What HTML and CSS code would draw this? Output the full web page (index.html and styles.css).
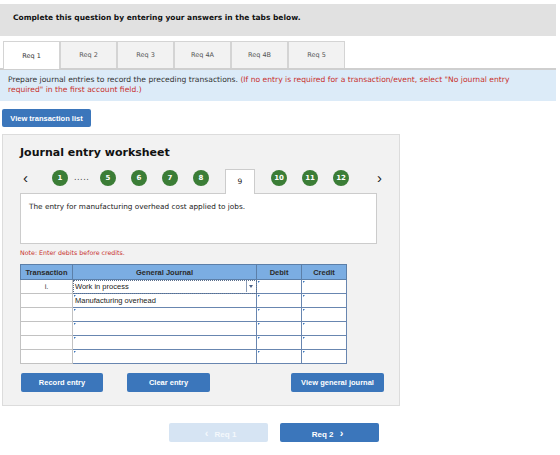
FILE: index.html
```html
<!DOCTYPE html>
<html lang="en">

<head>
    <title>Journal entry worksheet</title>
    <link rel="stylesheet" href="styles.css">
</head>

<body>
    <div class="question-bar">Complete this question by entering your answers in the tabs below.</div>

    <div class="tabs">
        <div class="tab active">Req 1</div>
        <div class="tab">Req 2</div>
        <div class="tab">Req 3</div>
        <div class="tab">Req 4A</div>
        <div class="tab">Req 4B</div>
        <div class="tab">Req 5</div>
    </div>

    <div class="instructions">
        Prepare journal entries to record the preceding transactions.
        <span class="red">(If no entry is required for a transaction/event, select "No journal entry required" in the first account field.)</span>
    </div>

    <button class="btn list-btn">View transaction list</button>

    <div class="worksheet">
        <h3>Journal entry worksheet</h3>

        <div class="steps">
            <span class="arrow prev">&lsaquo;</span>
            <span class="step first">1</span>
            <span class="dots">.....</span>
            <span class="step">5</span>
            <span class="step">6</span>
            <span class="step">7</span>
            <span class="step before-current">8</span>
            <span class="step current">9</span>
            <span class="step">10</span>
            <span class="step">11</span>
            <span class="step">12</span>
            <span class="arrow next">&rsaquo;</span>
        </div>

        <div class="description">The entry for manufacturing overhead cost applied to jobs.</div>

        <div class="note">Note: Enter debits before credits.</div>

        <table class="journal">
            <thead>
                <tr>
                    <th class="col-trans">Transaction</th>
                    <th class="col-account">General Journal</th>
                    <th class="col-amt">Debit</th>
                    <th class="col-amt">Credit</th>
                </tr>
            </thead>
            <tbody>
                <tr>
                    <td class="trans">i.</td>
                    <td class="field account focused">Work in process<span class="caret"></span></td>
                    <td class="field"></td>
                    <td class="field"></td>
                </tr>
                <tr>
                    <td class="trans"></td>
                    <td class="field account">Manufacturing overhead</td>
                    <td class="field"></td>
                    <td class="field"></td>
                </tr>
                <tr>
                    <td class="trans"></td>
                    <td class="field account"></td>
                    <td class="field"></td>
                    <td class="field"></td>
                </tr>
                <tr>
                    <td class="trans"></td>
                    <td class="field account"></td>
                    <td class="field"></td>
                    <td class="field"></td>
                </tr>
                <tr>
                    <td class="trans"></td>
                    <td class="field account"></td>
                    <td class="field"></td>
                    <td class="field"></td>
                </tr>
                <tr>
                    <td class="trans"></td>
                    <td class="field account"></td>
                    <td class="field"></td>
                    <td class="field"></td>
                </tr>
            </tbody>
        </table>

        <div class="actions">
            <button class="btn record-btn">Record entry</button>
            <button class="btn clear-btn">Clear entry</button>
            <button class="btn journal-btn">View general journal</button>
        </div>
    </div>

    <div class="pager">
        <button class="btn page-btn disabled"><span class="chev">&lsaquo;</span> Req 1</button>
        <button class="btn page-btn">Req 2 <span class="chev">&rsaquo;</span></button>
    </div>
</body>

</html>
```

FILE: styles.css
```css
body {
    margin: 0;
    padding: 4px 4px 0 0;
    width: 556px;
    font-family: 'DejaVu Sans', Verdana, sans-serif;
    color: #222;
    background: white;
}

.question-bar {
    background: #e1e1e1;
    height: 32px;
    box-sizing: border-box;
    padding: 9px 0 0 13px;
    font-size: 7.5px;
    font-weight: bold;
    color: #111;
}

.tabs {
    display: flex;
    margin-top: 5px;
    padding-left: 3px;
    border-bottom: 2px solid #cfcfcf;
}

.tab {
    width: 57px;
    height: 27px;
    box-sizing: border-box;
    border: 1px solid #d4d4d4;
    border-bottom: none;
    background: #f2f2f2;
    font-size: 6.5px;
    color: #555;
    display: flex;
    align-items: center;
    justify-content: center;
}

.tab.active {
    background: white;
    height: 28px;
    margin-bottom: -2px;
    color: #333;
}

.instructions {
    background: #dcebf8;
    padding: 5px 24px 6px 8px;
    font-size: 7.6px;
    line-height: 10px;
    color: #333;
}

.red {
    color: #c8302c;
}

.btn {
    border: none;
    border-radius: 2px;
    background: #3b76bb;
    color: white;
    font-family: 'Liberation Sans', Arial, sans-serif;
    font-weight: bold;
    font-size: 7.5px;
    height: 19px;
    padding: 0;
    cursor: pointer;
}

.list-btn {
    display: block;
    margin: 8px 0 0 2px;
    width: 89px;
    height: 18px;
}

.worksheet {
    margin: 7px 0 0 2px;
    width: 398px;
    height: 272px;
    box-sizing: border-box;
    background: #f2f2f2;
    border: 1px solid #dcdcdc;
    padding: 0 0 0 17px;
}

.worksheet h3 {
    margin: 11px 0 0;
    font-size: 11px;
    line-height: 14px;
    color: #111;
}

.steps {
    display: flex;
    align-items: flex-start;
    margin-top: 9px;
    height: 24px;
}

.arrow {
    font-size: 15px;
    line-height: 15px;
    color: #222;
    font-family: 'Liberation Sans', sans-serif;
}

.prev {
    margin: 1px 0 0 3px;
    width: 29px;
}

.next {
    margin: 1px 0 0 13px;
}

.step {
    width: 16px;
    height: 16px;
    margin: 1px 15px 0 0;
    border-radius: 50%;
    background: #3b7d36;
    color: white;
    font-size: 7px;
    font-weight: bold;
    display: flex;
    align-items: center;
    justify-content: center;
}

.step.first {
    margin-right: 6px;
}

.step.before-current {
    margin-right: 16px;
}

.step.current {
    width: 30px;
    height: 25px;
    margin: 0 16px -1px 0;
    padding-bottom: 2px;
    border-radius: 0;
    background: white;
    border: 1px solid #ccc;
    border-bottom: none;
    box-sizing: border-box;
    color: #222;
    font-weight: normal;
    font-size: 7.5px;
    position: relative;
    z-index: 1;
}

.dots {
    width: 26px;
    font-size: 8px;
    color: #444;
    letter-spacing: 0.5px;
    margin-top: 4px;
}

.description {
    width: 357px;
    height: 51px;
    box-sizing: border-box;
    background: white;
    border: 1px solid #ccc;
    padding: 8px 8px;
    font-size: 7.3px;
    color: #222;
}

.note {
    margin-top: 5px;
    font-size: 6.3px;
    color: #c8302c;
}

.journal {
    margin-top: 8px;
    border-collapse: collapse;
    font-family: 'Liberation Sans', Arial, sans-serif;
    font-size: 7.5px;
}

.journal th {
    height: 14px;
    padding: 0;
    background: #7badE2;
    border: 1px solid #5c7fa8;
    font-weight: bold;
    color: #2a2a2a;
}

.col-trans {
    width: 51px;
}

.col-account {
    width: 183px;
}

.col-amt {
    width: 44px;
}

.journal td {
    height: 13px;
    padding: 0 2px;
    background: white;
}

.trans {
    border: 1px solid #c2c2c2;
    text-align: center;
    color: #444;
}

.field {
    border: 1px solid #6886b0;
    position: relative;
    color: #222;
}

.field::before {
    content: "";
    position: absolute;
    left: 1px;
    top: 1px;
    border-top: 2px solid #3b76bb;
    border-right: 2px solid transparent;
}

.focused {
    outline: 1px dotted #5b6f8c;
    outline-offset: -1px;
}

.focused::before {
    display: none;
}

.caret {
    position: absolute;
    right: 0;
    top: 1px;
    bottom: 1px;
    width: 9px;
    border-left: 1px solid #8a9cb8;
}

.caret::after {
    content: "";
    position: absolute;
    left: 2px;
    top: 4px;
    border-left: 2.5px solid transparent;
    border-right: 2.5px solid transparent;
    border-top: 3px solid #4c6288;
}

.actions {
    display: flex;
    margin-top: 9px;
}

.record-btn {
    width: 82px;
    margin-left: 1px;
}

.clear-btn {
    width: 83px;
    margin-left: 24px;
}

.journal-btn {
    width: 93px;
    margin-left: 81px;
}

.pager {
    display: flex;
    margin: 17px 0 0 169px;
    gap: 12px;
}

.page-btn {
    width: 99px;
    font-size: 8px;
}

.page-btn.disabled {
    background: #d6e4f3;
    color: #f4f8fc;
}

.chev {
    font-size: 11px;
    margin: 0 4px;
}
```
